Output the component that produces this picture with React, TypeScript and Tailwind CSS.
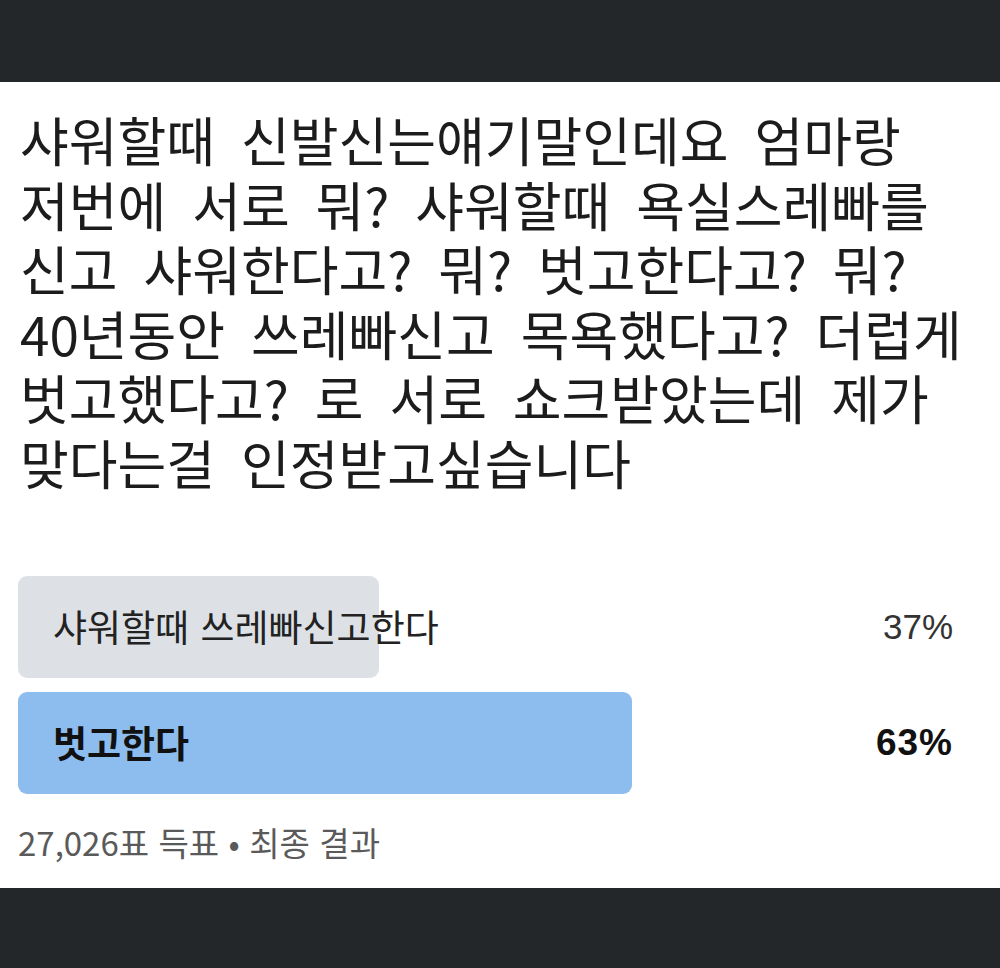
const question = [
  "샤워할때 신발신는얘기말인데요 엄마랑",
  "저번에 서로 뭐? 샤워할때 욕실스레빠를",
  "신고 샤워한다고? 뭐? 벗고한다고? 뭐?",
  "40년동안 쓰레빠신고 목욕했다고? 더럽게",
  "벗고했다고? 로 서로 쇼크받았는데 제가",
  "맞다는걸 인정받고싶습니다",
];

const options = [
  { label: "샤워할때 쓰레빠신고한다", pct: 37, winner: false },
  { label: "벗고한다", pct: 63, winner: true },
];

export default function App() {
  return (
    <div className="flex h-[968px] w-[1000px] flex-col bg-[#23272a] font-['Noto_Sans_CJK_KR','Noto_Sans',sans-serif]">
      {/* top bar */}
      <div className="h-[82px] shrink-0" />

      {/* poll card */}
      <div className="flex h-[806px] flex-col bg-white pl-[18px] pr-[7px] pt-[25px]">
        <div className="pl-[2px] text-[53px] leading-[64.5px] text-[#1c1c1c] [word-spacing:14px]">
          {question.map((line) => (
            <div key={line} className="whitespace-nowrap">
              {line}
            </div>
          ))}
        </div>

        <div className="mt-[82px] flex flex-col gap-[14px]">
          {options.map((o) => (
            <div key={o.label} className="relative flex h-[102px] items-center justify-between">
              <div
                className={`absolute inset-y-0 left-0 rounded-[9px] ${o.winner ? "bg-[#8cbdee]" : "bg-[#dde1e6]"}`}
                style={{ width: `${o.pct}%` }}
              />
              <span
                className={`relative pl-[35px] text-[37px] [word-spacing:3px] ${o.winner ? "font-bold text-[#111]" : "text-[#222]"}`}
              >
                {o.label}
              </span>
              <span
                className={`relative pr-[40px] font-['Liberation_Sans',sans-serif] ${o.winner ? "text-[37px] font-bold tracking-[1px] text-[#111]" : "text-[35px] text-[#333]"}`}
              >
                {o.pct}%
              </span>
            </div>
          ))}
        </div>

        <div className="mt-[23px] text-[33px] leading-[50px] text-[#5a5a5a] [word-spacing:2px]">
          27,026표 득표 • 최종 결과
        </div>
      </div>
    </div>
  );
}
